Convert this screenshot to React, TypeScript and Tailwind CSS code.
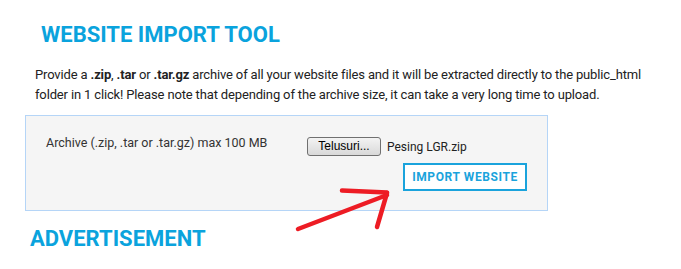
export default function App() {
  return (
    <main className="relative h-[269px] w-[681px] overflow-hidden bg-white font-['Roboto',sans-serif] text-[#222]">
      {/* IMPORT TOOL */}
      <section className="pt-[22px]">
        <h1 className="pl-[41px] text-[22px] font-bold leading-[26px] text-[#0aa3dd]">
          WEBSITE IMPORT TOOL
        </h1>
        <p className="mt-[17px] whitespace-nowrap pl-[35px] text-[13px] leading-[20px] tracking-[-0.15px]">
          Provide a <b>.zip</b>, <b>.tar</b> or <b>.tar.gz</b> archive of all your website files and it will be
          extracted directly to the public_html
          <br />
          folder in 1 click! Please note that depending of the archive size, it can take a very long time to upload.
        </p>

        <div className="ml-[25px] mt-[10px] flex h-[96px] w-[523px] border border-[#b5d5f7] bg-[#f5f5f5] pl-[20px] pr-[20px] pt-[19px]">
          <div className="w-[261px] text-[12.5px] leading-[16px] text-[#333]">
            Archive (.zip, .tar or .tar.gz) max 100 MB
          </div>
          <div className="flex flex-1 flex-col items-end">
            <div className="mt-[2px] flex w-full items-center">
              <button className="h-[19px] w-[74px] rounded-[3px] border border-[#707070] bg-gradient-to-b from-[#f3f3f3] to-[#d9d9d9] font-['Liberation_Sans',sans-serif] text-[12px] leading-[17px] text-black">
                Telusuri...
              </button>
              <span className="ml-[6px] text-[12px] leading-[16px] text-[#222]">Pesing LGR.zip</span>
            </div>
            <button className="mt-[7px] h-[28px] w-[124px] border-2 border-[#1aa3dc] bg-white text-[12px] font-bold tracking-[0.6px] text-[#1aa3dc]">
              IMPORT WEBSITE
            </button>
          </div>
        </div>

        <h2 className="mt-[15px] pl-[30px] text-[22px] font-bold leading-[26px] text-[#0aa3dd]">ADVERTISEMENT</h2>
      </section>

      {/* hand-drawn arrow */}
      <svg className="absolute left-0 top-0" width="681" height="269" viewBox="0 0 681 269">
        <g stroke="#ed1c24" strokeWidth="4.5" strokeLinecap="round" strokeLinejoin="round" fill="none">
          <path d="M298 229 L387 195" />
          <path d="M342 190.5 L387 192.5" />
          <path d="M387 193 L377 227" />
        </g>
      </svg>
    </main>
  );
}
